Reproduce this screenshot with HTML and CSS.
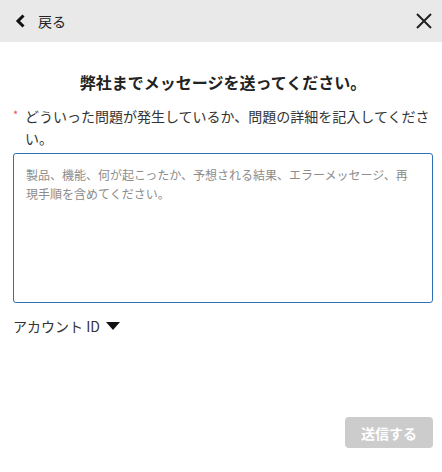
FILE: index.html
```html
<!DOCTYPE html>
<html lang="ja">
<head>
<meta charset="UTF-8" />
<meta name="viewport" content="width=device-width, initial-scale=1" />
<title>お問い合わせ</title>
<link rel="stylesheet" href="styles.css">
</head>
<body>

<header class="topbar">
  <button class="back">
    <svg width="12" height="14" viewBox="0 0 12 14"><polyline points="8.5,1.5 3,7 8.5,12.5" fill="none" stroke="#111" stroke-width="3"/></svg>
    <span>戻る</span>
  </button>
  <button class="close">
    <svg width="18" height="18" viewBox="0 0 18 18"><path d="M2 2 L16 16 M16 2 L2 16" stroke="#222" stroke-width="2" fill="none"/></svg>
  </button>
</header>

<main class="form">
  <h1 class="title">弊社までメッセージを送ってください。</h1>
  <label class="field-label" for="msg"><span class="req">*</span><span>どういった問題が発生しているか、問題の詳細を記入してください。</span></label>
  <textarea id="msg" class="message" placeholder="製品、機能、何が起こったか、予想される結果、エラーメッセージ、再現手順を含めてください。"></textarea>

  <div class="account">アカウント ID <span class="caret"></span></div>

  <div class="actions">
    <button class="send" disabled>送信する</button>
  </div>
</main>

</body>
</html>
```

FILE: styles.css
```css
body {
  margin: 0;
  background: #fff;
  color: #222;
  font-family: "Noto Sans CJK JP", "Noto Sans", sans-serif;
}
button {
  font-family: inherit;
  border: 0;
  background: none;
  padding: 0;
}

/* 上部バー */
.topbar {
  display: flex;
  align-items: center;
  justify-content: space-between;
  height: 42px;
  padding: 0 9px 0 15px;
  background: #e9e9e9;
}
.back {
  display: flex;
  align-items: center;
  gap: 11px;
  font-size: 14px;
  color: #222;
}
.close {
  display: flex;
  width: 18px;
  height: 18px;
}

.form {
  display: flex;
  flex-direction: column;
  padding: 0 9px 0 13px;
}
.title {
  margin: 28px 0 0;
  font-size: 16px;
  line-height: 24px;
  font-weight: bold;
  text-align: center;
  color: #222;
}
.field-label {
  display: flex;
  margin-top: 11px;
  font-size: 14px;
  line-height: 22px;
  color: #333;
}
.req {
  width: 12px;
  flex: none;
  color: #e05050;
  font-size: 11px;
  line-height: 18px;
}
.message {
  box-sizing: border-box;
  margin-top: 4px;
  width: 100%;
  height: 150px;
  padding: 11px 16px 8px 12px;
  border: 1px solid #2f6fb6;
  border-radius: 3px;
  font-family: inherit;
  font-size: 12px;
  line-height: 19px;
  resize: none;
  outline: none;
}
.message::placeholder {
  color: #8c8c8c;
}

.account {
  display: flex;
  align-items: center;
  gap: 6px;
  margin-top: 13px;
  font-size: 14px;
  line-height: 20px;
  color: #333;
}
.caret {
  width: 0;
  height: 0;
  border-left: 7px solid transparent;
  border-right: 7px solid transparent;
  border-top: 8px solid #111;
}

.actions {
  display: flex;
  justify-content: flex-end;
  margin-top: 81px;
}
.send {
  width: 88px;
  height: 31px;
  border-radius: 4px;
  background: #cccccc;
  color: #fff;
  font-size: 14px;
  font-weight: bold;
}
```
